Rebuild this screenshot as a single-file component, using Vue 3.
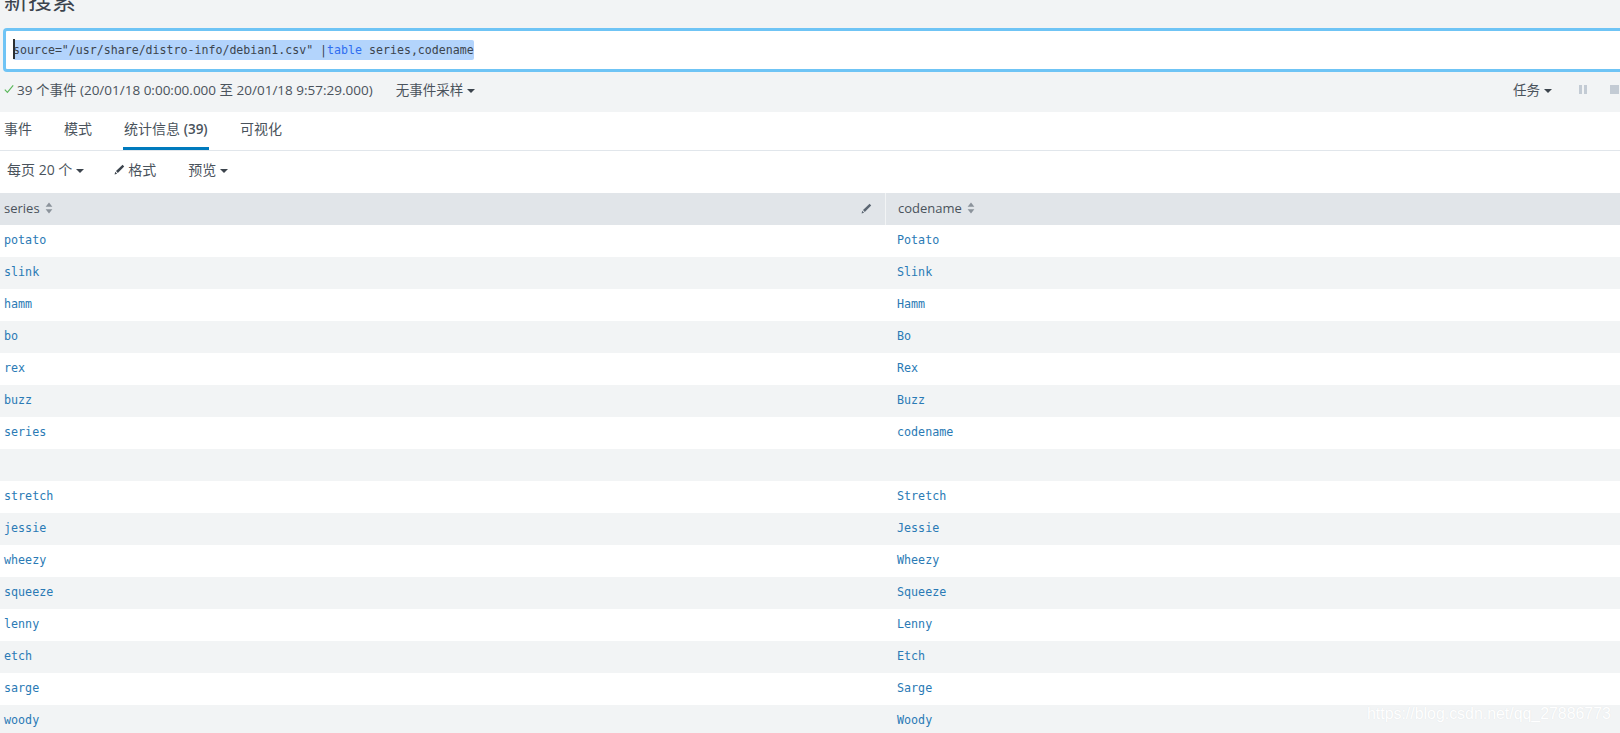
<script setup>
const rows = [
  ['potato', 'Potato'],
  ['slink', 'Slink'],
  ['hamm', 'Hamm'],
  ['bo', 'Bo'],
  ['rex', 'Rex'],
  ['buzz', 'Buzz'],
  ['series', 'codename'],
  ['', ''],
  ['stretch', 'Stretch'],
  ['jessie', 'Jessie'],
  ['wheezy', 'Wheezy'],
  ['squeeze', 'Squeeze'],
  ['lenny', 'Lenny'],
  ['etch', 'Etch'],
  ['sarge', 'Sarge'],
  ['woody', 'Woody']
]
</script>

<template>
  <main class="page">
    <div class="title-wrap">
      <h1>新搜索</h1>
    </div>

    <div class="search">
      <span class="caret"></span>
      <span class="query">source="/usr/share/distro-info/debian1.csv" |<span class="cmd">table</span> series,codename</span>
    </div>

    <div class="status">
      <svg class="check" width="10" height="10" viewBox="0 0 10 10">
        <path d="M0.8 5.6 L3.4 8.4 L9.2 1.4" fill="none" stroke="#5cb85c" stroke-width="1.2" />
      </svg>
      <span class="count">39 个事件 (20/01/18 0:00:00.000 至 20/01/18 9:57:29.000)</span>
      <span class="sampling">无事件采样<i class="arrow"></i></span>
      <span class="job">任务<i class="arrow"></i></span>
      <span class="pause"><b></b><b></b></span>
      <span class="stop"></span>
    </div>

    <nav class="tabs">
      <a>事件</a>
      <a>模式</a>
      <a class="active">统计信息 <b>(39)</b></a>
      <a>可视化</a>
    </nav>

    <div class="toolbar">
      <span class="perpage">每页 20 个<i class="arrow"></i></span>
      <span class="format">
        <svg width="11" height="11" viewBox="0 0 11 11">
          <path d="M0.6 10.4 L1.2 7.8 L3.1 9.7 Z M2 7 L8.6 0.8 L10.2 2.4 L3.8 8.9 Z" fill="#3c444d" />
        </svg>
        格式
      </span>
      <span class="preview">预览<i class="arrow"></i></span>
    </div>

    <div class="table-head">
      <div class="th first">
        <span>series</span>
        <svg class="sort" width="8" height="12" viewBox="0 0 7 11">
          <path d="M3.5 0.5 L6.6 4.4 H0.4 Z M3.5 10.5 L0.4 6.6 H6.6 Z" fill="#8b939b" />
        </svg>
        <svg class="pencil" width="11" height="11" viewBox="0 0 11 11">
          <path d="M0.6 10.4 L1.2 7.8 L3.1 9.7 Z M2 7 L8.6 0.8 L10.2 2.4 L3.8 8.9 Z" fill="#5c6773" />
        </svg>
      </div>
      <div class="th">
        <span>codename</span>
        <svg class="sort" width="8" height="12" viewBox="0 0 7 11">
          <path d="M3.5 0.5 L6.6 4.4 H0.4 Z M3.5 10.5 L0.4 6.6 H6.6 Z" fill="#8b939b" />
        </svg>
      </div>
    </div>

    <div class="row" :class="{ alt: i % 2 }" v-for="(row, i) in rows" :key="i">
      <div class="cell first">{{ row[0] }}</div>
      <div class="cell">{{ row[1] }}</div>
    </div>

    <div class="watermark">https://blog.csdn.net/qq_27886773</div>
  </main>
</template>

<style scoped>
.page {
  position: relative;
  width: 1640px;
  height: 733px;
  overflow: hidden;
  background: #f2f4f5;
  color: #4a535c;
  font-family: "Open Sans", "Noto Sans CJK SC", sans-serif;
  font-size: 14px;
}
.title-wrap {
  height: 14px;
  display: flex;
  align-items: flex-end;
  overflow: hidden;
  padding-left: 4px;
}
h1 {
  margin: 0;
  font-size: 24px;
  line-height: 28px;
  font-weight: 400;
  flex: none;
  color: #3c444d;
}
.search {
  position: relative;
  box-sizing: border-box;
  height: 44px;
  margin: 14px 0 0 3px;
  padding-left: 7px;
  background: #fff;
  border: 3px solid #6fc4f5;
  border-radius: 4px;
  display: flex;
  align-items: center;
  font-family: "DejaVu Sans Mono", monospace;
  font-size: 11.6px;
  color: #3c444d;
}
.query {
  background: #b3d4fc;
  line-height: 20px;
  border-radius: 2px;
  white-space: pre;
}
.cmd {
  color: #2f6df0;
}
.caret {
  position: absolute;
  left: 7px;
  top: 8px;
  width: 2px;
  height: 20px;
  background: #2b3033;
}
.status {
  height: 40px;
  display: flex;
  align-items: center;
  padding: 0 0 6px 4px;
  box-sizing: border-box;
  font-size: 13.5px;
}
.check {
  margin-right: 3px;
}
.sampling {
  margin-left: 23px;
}
.job {
  margin-left: auto;
}
.arrow {
  display: inline-block;
  margin-left: 4px;
  border-left: 4px solid transparent;
  border-right: 4px solid transparent;
  border-top: 4px solid #3c444d;
  vertical-align: 2px;
}
.pause {
  display: flex;
  gap: 2px;
  margin-left: 27px;
}
.pause b {
  width: 3px;
  height: 9px;
  background: #c3cbd4;
}
.stop {
  width: 9px;
  height: 9px;
  margin-left: 23px;
  margin-right: 21px;
  background: #c3cbd4;
}
.tabs {
  height: 39px;
  box-sizing: border-box;
  display: flex;
  gap: 32px;
  padding-left: 4px;
  background: #fff;
  border-bottom: 1px solid #e1e6eb;
}
.tabs a {
  height: 38px;
  box-sizing: border-box;
  padding-top: 7px;
  line-height: 20px;
}
.tabs a.active {
  margin: 0 -1px;
  padding: 7px 0 0 1px;
  border-bottom: 3px solid #007abd;
  width: 86px;
  white-space: nowrap;
}
.tabs a.active b {
  font-weight: 600;
  font-size: 13.5px;
}
.toolbar {
  height: 42px;
  display: flex;
  align-items: center;
  padding: 0 0 6px 7px;
  box-sizing: border-box;
  background: #fff;
}
.format {
  margin-left: 30px;
  display: flex;
  align-items: center;
  gap: 3px;
}
.preview {
  margin-left: 32px;
}
.table-head {
  display: flex;
  height: 32px;
}
.th {
  flex: 1;
  display: flex;
  align-items: center;
  gap: 5px;
  padding: 0 0 2px 12px;
  background: #e1e5e9;
  font-size: 13px;
}
.th.first {
  flex: none;
  box-sizing: border-box;
  width: 885px;
  margin-right: 1px;
  padding-left: 4px;
}
.pencil {
  margin-left: auto;
  margin-right: 13px;
}
.row {
  display: flex;
  height: 32px;
  line-height: 31px;
  background: #fff;
  font-family: "DejaVu Sans Mono", monospace;
  font-size: 11.7px;
  color: #2a7ab5;
}
.row.alt {
  background: #f2f4f5;
}
.cell {
  flex: 1;
  padding-left: 11px;
}
.cell.first {
  flex: none;
  box-sizing: border-box;
  width: 886px;
  padding-left: 4px;
}
.watermark {
  position: absolute;
  left: 1367px;
  top: 704px;
  font-family: "Liberation Sans", sans-serif;
  font-size: 15.9px;
  line-height: 20px;
  color: #fff;
  text-shadow: 0 0 1px #dde0e3;
}
</style>
